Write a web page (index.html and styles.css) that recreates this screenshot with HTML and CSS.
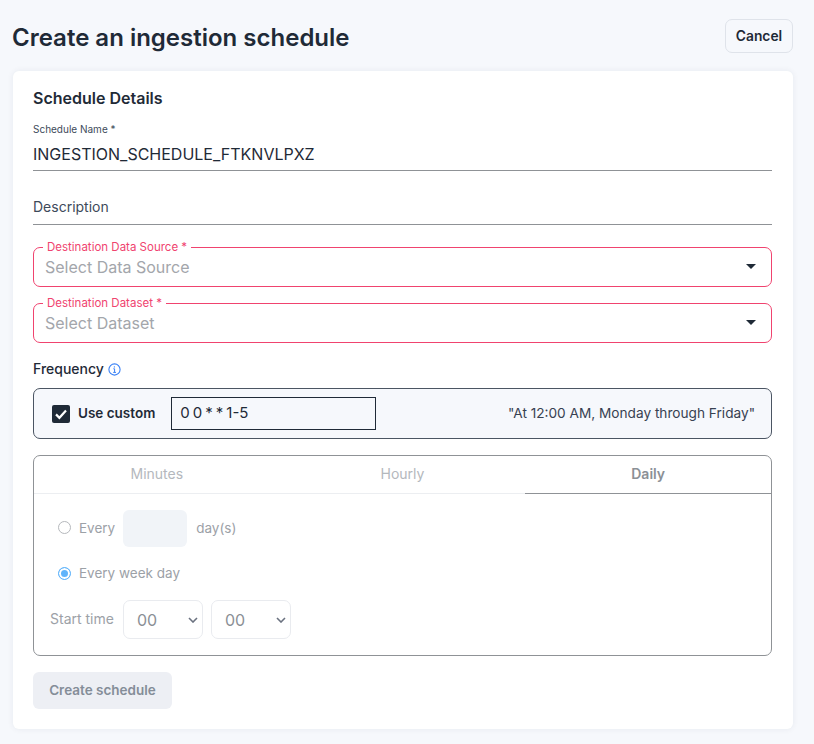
FILE: index.html
```html
<!DOCTYPE html>
<html lang="en">
<head>
  <meta charset="UTF-8" />
  <title>Create an ingestion schedule</title>
  <link rel="stylesheet" href="styles.css">
</head>
<body>
  <header class="page-head">
    <h1>Create an ingestion schedule</h1>
    <button class="cancel-btn">Cancel</button>
  </header>

  <main class="card">
    <h2>Schedule Details</h2>

    <div class="line-field name-field">
      <label>Schedule Name *</label>
      <div class="line-value">INGESTION_SCHEDULE_FTKNVLPXZ</div>
    </div>

    <div class="line-field desc-field">
      <div class="line-hint">Description</div>
    </div>

    <fieldset class="pick-field">
      <legend>Destination Data Source *</legend>
      <span class="pick-text">Select Data Source</span>
      <span class="pick-arrow"></span>
    </fieldset>

    <fieldset class="pick-field">
      <legend>Destination Dataset *</legend>
      <span class="pick-text">Select Dataset</span>
      <span class="pick-arrow"></span>
    </fieldset>

    <div class="freq-title">
      Frequency
      <svg width="13" height="13" viewBox="0 0 13 13" fill="none">
        <circle cx="6.5" cy="6.5" r="5.6" stroke="#3b82f6" stroke-width="1.1"/>
        <path d="M5.3 5.8H6.6V9.4M5.2 9.4H8" stroke="#3b82f6" stroke-width="1"/>
        <circle cx="6.4" cy="3.9" r="0.7" fill="#3b82f6"/>
      </svg>
    </div>

    <div class="custom-box">
      <span class="check">
        <svg width="18" height="18" viewBox="0 0 18 18" fill="none">
          <path d="M4 9.4L7.4 12.8L14 5.6" stroke="#fff" stroke-width="2.2"/>
        </svg>
      </span>
      <span class="custom-label">Use custom</span>
      <div class="cron-input">0 0 * * 1-5</div>
      <span class="cron-text">"At 12:00 AM, Monday through Friday"</span>
    </div>

    <section class="tabs-panel">
      <div class="tabs">
        <div class="tab">Minutes</div>
        <div class="tab">Hourly</div>
        <div class="tab active">Daily</div>
      </div>
      <div class="tab-body">
        <div class="opt-row every-row">
          <span class="radio"></span>
          <span>Every</span>
          <span class="num-input"></span>
          <span class="unit">day(s)</span>
        </div>
        <div class="opt-row week-row">
          <span class="radio on"></span>
          <span>Every week day</span>
        </div>
        <div class="opt-row time-row">
          <span class="time-label">Start time</span>
          <span class="time-select">00
            <svg width="10" height="6" viewBox="0 0 10 6" fill="none"><path d="M1 1L5 5L9 1" stroke="#6b7280" stroke-width="1.6"/></svg>
          </span>
          <span class="time-select">00
            <svg width="10" height="6" viewBox="0 0 10 6" fill="none"><path d="M1 1L5 5L9 1" stroke="#6b7280" stroke-width="1.6"/></svg>
          </span>
        </div>
      </div>
    </section>

    <button class="create-btn">Create schedule</button>
  </main>
</body>
</html>
```

FILE: styles.css
```css
html, body {
  margin: 0;
  padding: 0;
  height: 744px;
  overflow: hidden;
  background: #f6f8fc;
  color: #1f2a37;
  font-family: "Inter", "Liberation Sans", sans-serif;
}

.page-head {
  display: flex;
  justify-content: space-between;
  align-items: center;
  height: 34px;
  padding: 19px 21px 18px 12px;
}

h1 {
  margin: 2px 0 0;
  font-size: 24px;
  font-weight: 600;
  color: #1f2a37;
}

.cancel-btn {
  width: 68px;
  height: 34px;
  padding: 0;
  border: 1px solid #dfe3ea;
  border-radius: 7px;
  background: #f6f8fc;
  color: #1f2a37;
  font: 600 13.8px "Inter", sans-serif;
}

.card {
  width: 739px;
  height: 658px;
  margin-left: 13px;
  padding: 0 21px 0 20px;
  background: #fff;
  border-radius: 6px;
  box-shadow: 0 0 6px rgba(30, 40, 70, 0.07);
  overflow: hidden;
}

h2 {
  margin: 17px 0 0;
  font-size: 16px;
  line-height: 20px;
  font-weight: 600;
}

.line-field {
  border-bottom: 1px solid #8f9296;
}

.name-field {
  margin-top: 15px;
  height: 47px;
}

.name-field label {
  display: block;
  font-size: 10px;
  line-height: 13px;
  color: #3d4a5a;
}

.line-value {
  margin-top: 8px;
  font-size: 16px;
  line-height: 20px;
}

.desc-field {
  margin-top: 26px;
  height: 27px;
}

.line-hint {
  font-size: 14px;
  line-height: 20px;
  color: #3d4a5a;
}

.pick-field {
  display: flex;
  justify-content: space-between;
  align-items: center;
  box-sizing: border-box;
  height: 46px;
  margin: 0;
  padding: 0 15px 7px 11px;
  border: 1px solid #f0436f;
  border-radius: 7px;
  min-width: 0;
}

.desc-field + .pick-field {
  margin-top: 16px;
}

.pick-field + .pick-field {
  margin-top: 10px;
}

.pick-field legend {
  margin-left: -2px;
  padding: 0 4px;
  font-size: 11.5px;
  line-height: 13px;
  color: #f0436f;
}

.pick-text {
  font-size: 16px;
  color: #a3a6ab;
}

.pick-arrow {
  width: 0;
  height: 0;
  border-left: 5px solid transparent;
  border-right: 5px solid transparent;
  border-top: 5px solid #1f2a37;
}

.freq-title {
  display: flex;
  align-items: center;
  gap: 4px;
  margin-top: 16px;
  font-size: 14px;
  line-height: 20px;
  font-weight: 500;
}

.custom-box {
  display: flex;
  align-items: center;
  box-sizing: border-box;
  height: 51px;
  margin-top: 9px;
  padding: 0 16px 0 18px;
  border: 1px solid #4b5563;
  border-radius: 7px;
  background: #f6f8fc;
}

.check {
  display: flex;
  width: 18px;
  height: 18px;
  border-radius: 2px;
  background: #1f2a37;
}

.custom-label {
  margin: 0 0 1px 8px;
  font-size: 13.5px;
  font-weight: 600;
}

.cron-input {
  box-sizing: border-box;
  width: 205px;
  height: 33px;
  margin-left: 16px;
  padding-left: 8px;
  border: 1px solid #1f2a37;
  font-size: 15px;
  line-height: 30px;
  word-spacing: -1.2px;
}

.cron-text {
  margin: 0 0 1px auto;
  font-size: 13.65px;
  color: #374151;
}

.tabs-panel {
  box-sizing: border-box;
  height: 201px;
  margin-top: 16px;
  border: 1px solid #8f9296;
  border-radius: 7px;
}

.tabs {
  display: flex;
  height: 38px;
}

.tab {
  flex: 1;
  border-bottom: 1px solid #eceef1;
  font-size: 14px;
  line-height: 36px;
  text-align: center;
  color: #b4b8bd;
}

.tab.active {
  border-bottom-color: #8f9296;
  color: #8b9096;
  font-weight: 600;
}

.tab-body {
  padding: 15px 0 0 16px;
  font-size: 13.5px;
  color: #9ca1a7;
}

.opt-row {
  display: flex;
  align-items: center;
}

.opt-row .radio {
  box-sizing: border-box;
  width: 13px;
  height: 13px;
  margin: 0 8px 0 8px;
  border: 1px solid #b5b8bc;
  border-radius: 50%;
}

.radio.on {
  border-color: #60b4fb;
  background: #60b4fb;
  box-shadow: inset 0 0 0 2px #fff;
}

.every-row {
  height: 37px;
}

.num-input {
  align-self: flex-start;
  width: 64px;
  height: 37px;
  margin: 1px 9px 0 8px;
  border-radius: 6px;
  background: #f1f4f8;
}

.week-row {
  height: 20px;
  margin-top: 17px;
}

.time-row {
  height: 39px;
  margin-top: 17px;
}

.time-label {
  width: 73px;
  font-size: 14px;
  margin-bottom: 3px;
}

.time-select {
  display: flex;
  justify-content: space-between;
  align-items: center;
  box-sizing: border-box;
  width: 80px;
  height: 39px;
  margin-right: 8px;
  padding: 0 4px 0 13px;
  border: 1px solid #e9ebef;
  border-radius: 7px;
  font-size: 16px;
  color: #8b9096;
}

.create-btn {
  display: block;
  width: 139px;
  height: 37px;
  margin-top: 16px;
  padding: 0 0 2px;
  border: 0;
  border-radius: 6px;
  background: #edeff4;
  color: #848d98;
  font: 600 13.5px "Inter", sans-serif;
}
```
